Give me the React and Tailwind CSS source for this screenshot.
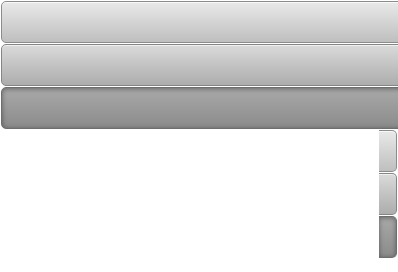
const wide = [
  "bg-linear-to-b from-[#e9e9e9] to-[#bfbfbf] border-[#8c8c8c] shadow-[inset_0_1px_0_rgba(255,255,255,0.7)]",
  "bg-linear-to-b from-[#dadada] to-[#adadad] border-[#858585] shadow-[inset_0_1px_0_rgba(255,255,255,0.6)]",
  "bg-linear-to-b from-[#a9a9a9] to-[#8b8b8b] border-[#6e6e6e] shadow-[inset_0_1px_5px_rgba(0,0,0,0.4)]",
];

const narrow = [
  "bg-linear-to-b from-[#e9e9e9] to-[#bfbfbf] border-[#8c8c8c] shadow-[inset_0_1px_0_rgba(255,255,255,0.7)]",
  "bg-linear-to-b from-[#dadada] to-[#adadad] border-[#858585] shadow-[inset_0_1px_0_rgba(255,255,255,0.6)]",
  "bg-linear-to-b from-[#a9a9a9] to-[#8b8b8b] border-[#6e6e6e] shadow-[inset_0_1px_5px_rgba(0,0,0,0.4)]",
];

export default function App() {
  return (
    <div className="w-[398px] h-[272px] overflow-hidden bg-white">
      <div className="flex flex-col gap-[1px] pt-[1px]">
        {wide.map((c, i) => (
          <button
            key={"w" + i}
            className={"ml-[1px] w-[420px] h-[42px] shrink-0 rounded-[5px] border " + c}
          />
        ))}
        {narrow.map((c, i) => (
          <button
            key={"n" + i}
            className={"ml-[379px] w-[18px] h-[42px] shrink-0 rounded-r-[5px] border-y border-r " + c}
          />
        ))}
      </div>
    </div>
  );
}
